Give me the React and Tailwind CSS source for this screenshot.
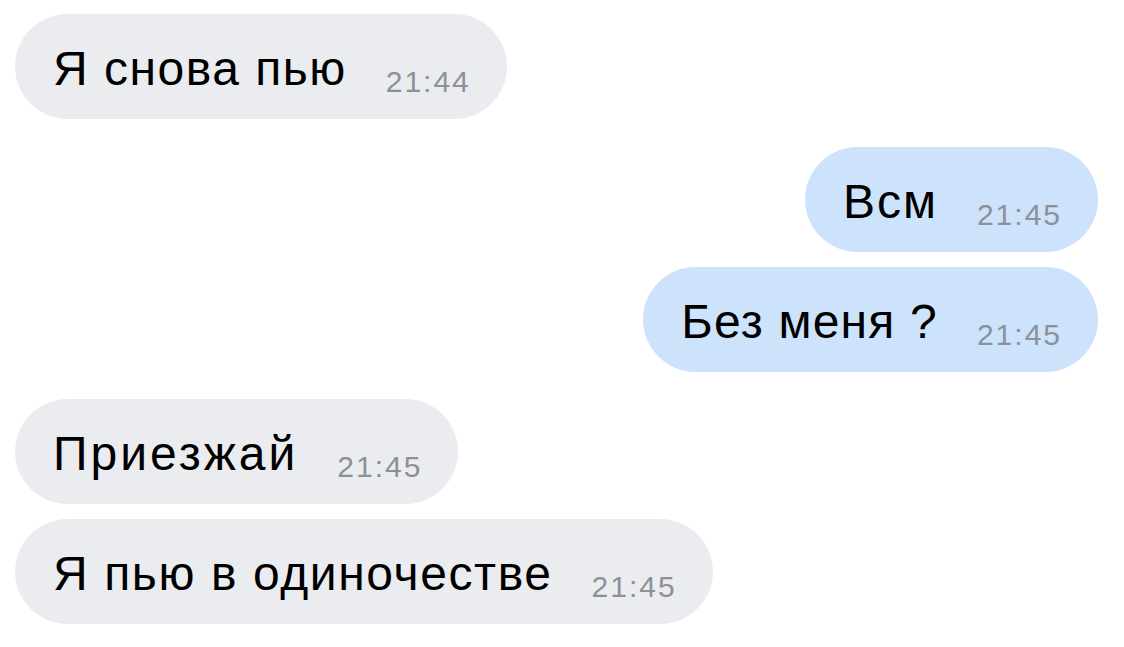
import React from 'react';

const messages = [
  { text: 'Я снова пью', time: '21:44', mine: false, gap: 'mt-[14px]', track: 'tracking-[1.5px]' },
  { text: 'Всм', time: '21:45', mine: true, gap: 'mt-[28px]', track: 'tracking-[2px]' },
  { text: 'Без меня ?', time: '21:45', mine: true, gap: 'mt-[15px]', track: 'tracking-[1.2px]' },
  { text: 'Приезжай', time: '21:45', mine: false, gap: 'mt-[27px]', track: 'tracking-[3px]' },
  { text: 'Я пью в одиночестве', time: '21:45', mine: false, gap: 'mt-[15px]', track: 'tracking-[1.6px]' },
];

const Bubble = ({ text, time, mine, gap, track }) => (
  <div className={`flex ${mine ? 'justify-end' : 'justify-start'} ${gap}`}>
    <div
      className={`h-[105px] rounded-full flex items-center pl-[38px] pr-[36px] ${
        mine ? 'bg-[#cde2fb]' : 'bg-[#ebecf0]'
      }`}
    >
      <div className="flex items-baseline gap-[39px]">
        <span className={`text-[48px] leading-none text-black relative top-[2px] ${track}`}>{text}</span>
        <span className="text-[30px] leading-none tracking-[2px] text-[#8c9199] relative top-[9px]">{time}</span>
      </div>
    </div>
  </div>
);

const App = () => {
  return (
    <div
      className="w-[1124px] h-[647px] bg-white pl-[15px] pr-[26px] overflow-hidden"
      style={{ fontFamily: '"Liberation Sans", Arial, sans-serif' }}
    >
      <div className="pt-px -mt-px">
        {messages.map((m, i) => (
          <Bubble key={i} {...m} />
        ))}
      </div>
    </div>
  );
};

export default App;
